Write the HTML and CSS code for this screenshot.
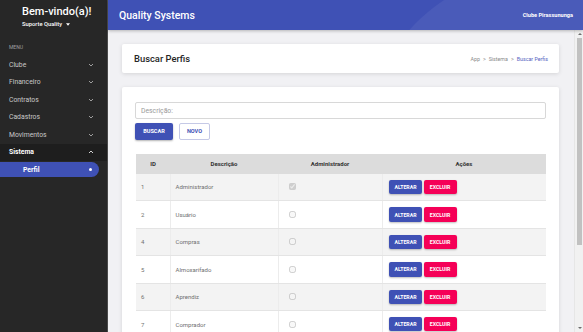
FILE: index.html
```html
<!DOCTYPE html>
<html lang="pt-BR">
  <head>
    <meta charset="utf-8" />
    <meta name="viewport" content="width=device-width, initial-scale=1.0" />
    <title>Quality Systems - Buscar Perfis</title>
    <link rel="stylesheet" href="styles.css">
  </head>
  <body>
    <div class="layout">
      <aside class="sidebar">
        <div class="user">
          <h2 class="user-name">Bem-vindo(a)!</h2>
          <div class="user-role">
            Suporte Quality
            <svg class="caret" width="5" height="3" viewBox="0 0 5 3"><path d="M0 0h5L2.5 3z" fill="currentColor"/></svg>
          </div>
        </div>
        <div class="menu-title">MENU</div>
        <ul class="menu">
          <li class="menu-item">Clube <svg class="chevron" viewBox="0 0 6 4"><path d="M1 1l2 2 2-2" /></svg></li>
          <li class="menu-item">Financeiro <svg class="chevron" viewBox="0 0 6 4"><path d="M1 1l2 2 2-2" /></svg></li>
          <li class="menu-item">Contratos <svg class="chevron" viewBox="0 0 6 4"><path d="M1 1l2 2 2-2" /></svg></li>
          <li class="menu-item">Cadastros <svg class="chevron" viewBox="0 0 6 4"><path d="M1 1l2 2 2-2" /></svg></li>
          <li class="menu-item">Movimentos <svg class="chevron" viewBox="0 0 6 4"><path d="M1 1l2 2 2-2" /></svg></li>
          <li class="menu-item open">Sistema <svg class="chevron" viewBox="0 0 6 4"><path d="M1 3l2-2 2 2" /></svg></li>
          <li class="submenu-item active">Perfil <span class="dot"></span></li>
        </ul>
      </aside>

      <div class="main">
        <header class="topbar">
          <span class="brand">Quality Systems</span>
          <span class="club">Clube Pirassununga</span>
        </header>

        <div class="viewport">
          <div class="content">
            <section class="card title-card">
              <h1>Buscar Perfis</h1>
              <nav class="breadcrumb">
                <span>App</span>
                <span class="sep">&gt;</span>
                <span>Sistema</span>
                <span class="sep">&gt;</span>
                <span class="current">Buscar Perfis</span>
              </nav>
            </section>

            <section class="card">
              <form class="search-form">
                <input type="text" class="search-input" placeholder="Descrição:" />
                <div class="form-actions">
                  <button type="button" class="btn btn-primary">BUSCAR</button>
                  <button type="button" class="btn btn-outline">NOVO</button>
                </div>
              </form>

              <table class="grid">
                <thead>
                  <tr>
                    <th class="col-id">ID</th>
                    <th class="col-desc">Descrição</th>
                    <th class="col-admin">Administrador</th>
                    <th>Ações</th>
                  </tr>
                </thead>
                <tbody>
                  <tr>
                    <td>1</td>
                    <td>Administrador</td>
                    <td class="check-cell"><input type="checkbox" checked disabled /></td>
                    <td class="actions"><button class="btn-sm btn-edit">ALTERAR</button><button class="btn-sm btn-delete">EXCLUIR</button></td>
                  </tr>
                  <tr>
                    <td>2</td>
                    <td>Usuário</td>
                    <td class="check-cell"><input type="checkbox" disabled /></td>
                    <td class="actions"><button class="btn-sm btn-edit">ALTERAR</button><button class="btn-sm btn-delete">EXCLUIR</button></td>
                  </tr>
                  <tr>
                    <td>4</td>
                    <td>Compras</td>
                    <td class="check-cell"><input type="checkbox" disabled /></td>
                    <td class="actions"><button class="btn-sm btn-edit">ALTERAR</button><button class="btn-sm btn-delete">EXCLUIR</button></td>
                  </tr>
                  <tr>
                    <td>5</td>
                    <td>Almoxarifado</td>
                    <td class="check-cell"><input type="checkbox" disabled /></td>
                    <td class="actions"><button class="btn-sm btn-edit">ALTERAR</button><button class="btn-sm btn-delete">EXCLUIR</button></td>
                  </tr>
                  <tr>
                    <td>6</td>
                    <td>Aprendiz</td>
                    <td class="check-cell"><input type="checkbox" disabled /></td>
                    <td class="actions"><button class="btn-sm btn-edit">ALTERAR</button><button class="btn-sm btn-delete">EXCLUIR</button></td>
                  </tr>
                  <tr>
                    <td>7</td>
                    <td>Comprador</td>
                    <td class="check-cell"><input type="checkbox" disabled /></td>
                    <td class="actions"><button class="btn-sm btn-edit">ALTERAR</button><button class="btn-sm btn-delete">EXCLUIR</button></td>
                  </tr>
                </tbody>
              </table>
            </section>
          </div>

          <div class="scrollbar">
            <span class="arrow arrow-up"></span>
            <span class="thumb"></span>
            <span class="track-rest"></span>
            <span class="arrow arrow-down"></span>
          </div>
        </div>
      </div>
    </div>
  </body>
</html>
```

FILE: styles.css
```css
:root {
  --indigo: #3f51b5;
  --pink: #f50057;
  --sidebar: #272727;
  --sidebar-dark: #1e1e1e;
  --page: #f1f1f4;
  --text: #333333;
  --muted: #707070;
  --line: #e4e4e4;
}

* {
  box-sizing: border-box;
}

html,
body {
  margin: 0;
  height: 100%;
  overflow: hidden;
}

body {
  font-family: Roboto, "Liberation Sans", Arial, sans-serif;
  color: var(--text);
  background-color: var(--page);
}

.layout {
  display: grid;
  grid-template-columns: 108px 1fr;
  height: 332px;
}

/* sidebar */

.sidebar {
  background-color: var(--sidebar);
  color: #c9c9c9;
  border-right: 1px solid #4a4a4a;
}

.user {
  padding: 5px 0 0 22px;
  height: 40px;
}

.user-name {
  margin: 0;
  font-size: 11px;
  font-weight: 500;
  line-height: 14px;
  color: #ffffff;
}

.user-role {
  display: flex;
  align-items: center;
  gap: 4px;
  margin-top: 2px;
  font-size: 5.8px;
  font-weight: 500;
  color: #ffffff;
}

.caret {
  width: 4px;
  height: 3px;
}

.menu-title {
  padding: 4px 0 0 9px;
  height: 16px;
  font-size: 5px;
  color: #a0a0a0;
}

.menu {
  list-style: none;
  margin: 0;
  padding: 0;
}

.menu-item {
  display: flex;
  align-items: center;
  justify-content: space-between;
  height: 17.5px;
  padding: 0 13px 0 9px;
  font-size: 6.8px;
}

.chevron {
  width: 6px;
  height: 4px;
  fill: none;
  stroke: #bdbdbd;
  stroke-width: 0.8;
}

.menu-item.open {
  background-color: var(--sidebar-dark);
  color: #ffffff;
  font-weight: bold;
}

.menu-item.open .chevron {
  stroke: #ffffff;
}

.submenu-item {
  display: flex;
  align-items: center;
  justify-content: space-between;
  height: 15px;
  margin: 1px 8px 0 0;
  padding: 0 7px 0 23px;
  font-size: 6.8px;
}

.submenu-item.active {
  background-color: var(--indigo);
  color: #ffffff;
  font-weight: bold;
  border-radius: 0 8px 8px 0;
}

.dot {
  width: 3px;
  height: 3px;
  border-radius: 50%;
  background-color: #ffffff;
}

/* main area */

.main {
  display: flex;
  flex-direction: column;
  min-width: 0;
}

.topbar {
  position: relative;
  overflow: hidden;
  display: flex;
  align-items: center;
  justify-content: space-between;
  height: 30px;
  padding: 0 10px 0 11px;
  background-color: var(--indigo);
  color: #ffffff;
  box-shadow: 0 1px 3px rgba(0, 0, 0, 0.25);
  z-index: 1;
}

.topbar::after {
  content: "";
  position: absolute;
  left: 265px;
  top: -40px;
  width: 420px;
  height: 320px;
  border-radius: 50%;
  background-color: rgba(255, 255, 255, 0.06);
}

.brand {
  font-size: 10.5px;
  font-weight: 500;
}

.club {
  font-size: 5.6px;
  font-weight: bold;
}

.viewport {
  display: flex;
  height: 302px;
  overflow: hidden;
}

.content {
  flex: 1;
  min-width: 0;
  overflow: hidden;
  padding: 14px 15px 14px 14px;
}

/* scrollbar of the content pane */

.scrollbar {
  display: flex;
  flex-direction: column;
  width: 9px;
  padding: 0 1px 0 2px;
  background-color: #f1f1f1;
  border-left: 1px solid #e6e6e6;
}

.arrow {
  display: flex;
  justify-content: center;
  align-items: center;
  height: 8px;
}

.arrow::before {
  content: "";
  border-left: 2px solid transparent;
  border-right: 2px solid transparent;
}

.arrow-up::before {
  border-bottom: 2px solid #6d6d6d;
}

.arrow-down::before {
  border-top: 2px solid #6d6d6d;
}

.thumb {
  height: 207px;
  background-color: #c1c1c1;
}

.track-rest {
  flex: 1;
}

.card {
  background-color: #ffffff;
  border-radius: 2px;
  box-shadow: 0 1px 4px rgba(0, 0, 0, 0.12);
}

.title-card {
  display: flex;
  align-items: center;
  justify-content: space-between;
  height: 29px;
  padding: 0 11px 0 12px;
  margin-bottom: 14px;
}

.title-card h1 {
  margin: 0;
  font-size: 9.4px;
  font-weight: 500;
  color: #262626;
}

.breadcrumb {
  display: flex;
  gap: 3px;
  font-size: 5.3px;
  color: #8a8a8a;
}

.breadcrumb .current {
  color: #5563c1;
}

.card:not(.title-card) {
  padding: 15px 13px 13px 13px;
}

/* search form */

.search-input {
  display: block;
  width: 100%;
  height: 17px;
  padding: 0 5px;
  border: 1px solid #d8d8d8;
  border-radius: 2px;
  font-family: inherit;
  font-size: 6.8px;
}

.search-input::placeholder {
  color: #9a9a9a;
}

.form-actions {
  display: flex;
  gap: 6px;
  margin-top: 4px;
}

.btn {
  height: 16.5px;
  border-radius: 2px;
  font-family: inherit;
  font-size: 5.6px;
  font-weight: bold;
  cursor: pointer;
}

.btn-primary {
  width: 38px;
  border: none;
  background-color: var(--indigo);
  color: #ffffff;
  box-shadow: 0 1px 2px rgba(0, 0, 0, 0.3);
}

.btn-outline {
  width: 31px;
  border: 1px solid #c5c9e6;
  background-color: #ffffff;
  color: var(--indigo);
}

/* table */

.grid {
  width: 410px;
  margin: 14px 0 0 1px;
  border-collapse: collapse;
  font-size: 6px;
}

.grid th {
  height: 20px;
  background-color: #dcdcdc;
  font-weight: bold;
  color: #333333;
}

.col-id {
  width: 34px;
}

.col-desc {
  width: 108px;
}

.col-admin {
  width: 104px;
}

.grid td {
  height: 27.4px;
  padding: 0 5px;
  color: var(--muted);
  border-bottom: 1px solid var(--line);
  border-right: 1px solid #ececec;
}

.grid td:last-child {
  border-right: none;
}

.grid tbody tr:nth-child(odd) {
  background-color: #f3f3f3;
}

.check-cell {
  padding-left: 10px !important;
}

.check-cell input {
  width: 7px;
  height: 7px;
  margin: 0;
  display: block;
}

.actions {
  padding-left: 6px !important;
}

.btn-sm {
  height: 14.5px;
  width: 33px;
  margin-right: 2px;
  border: none;
  border-radius: 2px;
  font-family: inherit;
  font-size: 5.2px;
  font-weight: bold;
  color: #ffffff;
  box-shadow: 0 1px 2px rgba(0, 0, 0, 0.25);
  cursor: pointer;
}

.btn-edit {
  background-color: var(--indigo);
}

.btn-delete {
  background-color: var(--pink);
}
```
